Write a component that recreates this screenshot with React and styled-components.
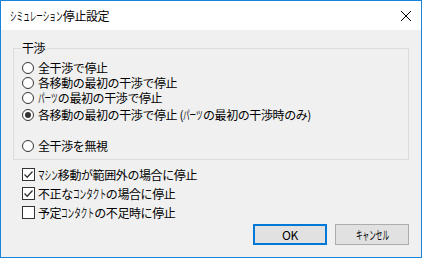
import React, { useState } from "react"
import styled, { createGlobalStyle } from "styled-components"

const Global = createGlobalStyle`
  html, body { margin: 0; padding: 0; background: #ffffff; }
  * { box-sizing: border-box; }
`

const FONT = `"Noto Sans CJK JP", "Liberation Sans", sans-serif`
const KANA_EM = 12
const KANA_SCALE = 0.55

const Window = styled.div`
  width: 422px;
  height: 258px;
  border: 1px solid #1883d7;
  display: flex;
  flex-direction: column;
  font-family: ${FONT};
  font-size: 12px;
  letter-spacing: -0.4px;
  color: #000;
  background: #f0f0f0;
`

const TitleBar = styled.div`
  height: 29px;
  background: #ffffff;
  display: flex;
  align-items: center;
  justify-content: space-between;
  padding: 0 9px 0 9px;
  flex-shrink: 0;
`

const Close = styled.svg`
  width: 12px;
  height: 12px;
`

const Client = styled.div`
  flex: 1;
  display: flex;
  flex-direction: column;
  padding: 10px 12px 12px 12px;
`

const Group = styled.fieldset`
  margin: 0;
  height: 120px;
  border: 1px solid #dcdcdc;
  padding: 4px 0 0 8px;
  display: flex;
  flex-direction: column;
`

const Legend = styled.legend`
  padding: 0 2px 0 0;
  line-height: 16px;
`

const Row = styled.label`
  display: flex;
  align-items: center;
  height: 15px;
  line-height: 15px;
  gap: 4px;
  margin-top: ${p => p.gap || 0}px;
  white-space: nowrap;
`

const Radio = styled.span`
  width: 12px;
  height: 12px;
  border-radius: 50%;
  border: 1px solid #333;
  background: #fff;
  display: flex;
  align-items: center;
  justify-content: center;
  flex-shrink: 0;

  &::after {
    content: "";
    width: 6px;
    height: 6px;
    border-radius: 50%;
    background: ${p => (p.on ? "#333" : "transparent")};
  }
`

const Checks = styled.div`
  display: flex;
  flex-direction: column;
  padding: 5px 0 0 9px;
`

const CheckRow = styled.label`
  display: flex;
  align-items: center;
  height: 19px;
  line-height: 19px;
  gap: 3px;
  white-space: nowrap;
`

const Box = styled.span`
  width: 13px;
  height: 13px;
  border: 1px solid #333;
  background: #fff;
  display: flex;
  align-items: center;
  justify-content: center;
  flex-shrink: 0;
`

const Buttons = styled.div`
  margin-top: auto;
  display: flex;
  justify-content: flex-end;
  gap: 8px;
`

const Button = styled.button`
  width: 74px;
  height: 21px;
  padding: 0;
  font-family: ${FONT};
  font-size: 12px;
  letter-spacing: -0.4px;
  color: #000;
  background: #e1e1e1;
  border: ${p => (p.primary ? "2px solid #0078d7" : "1px solid #adadad")};
  display: flex;
  align-items: center;
  justify-content: center;
`

/* katakana in Meiryo UI is roughly half width, so squeeze each run */
const Kana = styled.span`
  display: inline-block;
  letter-spacing: 0;
  width: ${p => p.n * KANA_EM}px;
  margin-right: ${p => -p.n * KANA_EM * (1 - KANA_SCALE)}px;
  transform: scaleX(${KANA_SCALE});
  transform-origin: left center;
`

const Txt = ({ children }) => (
  <span>
    {children.split(/([\u30A0-\u30FF]+)/).map((part, i) =>
      /^[\u30A0-\u30FF]+$/.test(part) ? (
        <Kana key={i} n={part.length}>{part}</Kana>
      ) : (
        part
      )
    )}
  </span>
)

const radios = [
  { text: "全干渉で停止" },
  { text: "各移動の最初の干渉で停止" },
  { text: "パーツの最初の干渉で停止" },
  { text: "各移動の最初の干渉で停止 (パーツの最初の干渉時のみ)", gap: 2 },
  { text: "全干渉を無視", gap: 16 },
]

const checks = [
  { text: "マシン移動が範囲外の場合に停止", on: true },
  { text: "不正なコンタクトの場合に停止", on: true },
  { text: "予定コンタクトの不足時に停止", on: false },
]

const Tick = () => (
  <svg width="11" height="11" viewBox="0 0 11 11">
    <path d="M1.5 5.5 L4.2 8.2 L9.5 2.5" fill="none" stroke="#333" strokeWidth="1.3" />
  </svg>
)

export default function App() {
  const [sel, setSel] = useState(3)
  return (
    <>
      <Global />
      <Window>
        <TitleBar>
          <Txt>シミュレーション停止設定</Txt>
          <Close viewBox="0 0 12 12">
            <path d="M1 1 L11 11 M11 1 L1 11" stroke="#000" strokeWidth="1" />
          </Close>
        </TitleBar>
        <Client>
          <Group>
            <Legend>干渉</Legend>
            {radios.map((r, i) => (
              <Row key={i} gap={r.gap} onClick={() => setSel(i)}>
                <Radio on={sel === i} />
                <Txt>{r.text}</Txt>
              </Row>
            ))}
          </Group>
          <Checks>
            {checks.map((c, i) => (
              <CheckRow key={i}>
                <Box>{c.on && <Tick />}</Box>
                <Txt>{c.text}</Txt>
              </CheckRow>
            ))}
          </Checks>
          <Buttons>
            <Button primary>OK</Button>
            <Button><Txt>キャンセル</Txt></Button>
          </Buttons>
        </Client>
      </Window>
    </>
  )
}
